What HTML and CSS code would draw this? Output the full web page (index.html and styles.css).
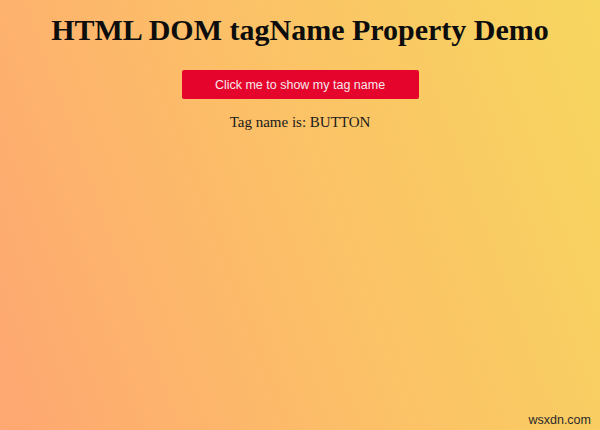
FILE: index.html
```html
<!DOCTYPE html>
<html>
<head>
<meta charset="utf-8">
<link rel="stylesheet" href="styles.css">
</head>
<body>
<main class="page">
  <h1 class="title">HTML DOM tagName Property Demo</h1>
  <button class="btn">Click me to show my tag name</button>
  <p class="result">Tag name is: BUTTON</p>
</main>
<div class="watermark">wsxdn.com</div>
</body>
</html>
```
FILE: styles.css
```css
html, body {
  margin: 0;
  padding: 0;
  width: 600px;
  height: 430px;
  overflow: hidden;
}
body {
  position: relative;
  background: linear-gradient(70deg, #fea772 0%, #fcbe68 45%, #f7d65f 100%);
  font-family: "Liberation Serif", "Times New Roman", serif;
  color: #111;
}
.page {
  display: flex;
  flex-direction: column;
  align-items: center;
  padding-top: 12px;
}
.title {
  margin: 0;
  font-size: 30px;
  font-weight: bold;
  line-height: 36px;
  color: #0d0d0d;
}
.btn {
  margin-top: 22px;
  width: 237px;
  height: 29px;
  border: none;
  border-radius: 2px;
  background: #e5042c;
  color: #f6e8ec;
  font-family: "Liberation Sans", Arial, sans-serif;
  font-size: 12.5px;
  padding: 0;
}
.result {
  margin: 14px 0 0;
  font-size: 15px;
  line-height: 18px;
  color: #1a1a1a;
}
.watermark {
  position: absolute;
  right: 9px;
  bottom: 3px;
  font-family: "Liberation Sans", Arial, sans-serif;
  font-size: 12.5px;
  color: #2a2a2a;
}
```
